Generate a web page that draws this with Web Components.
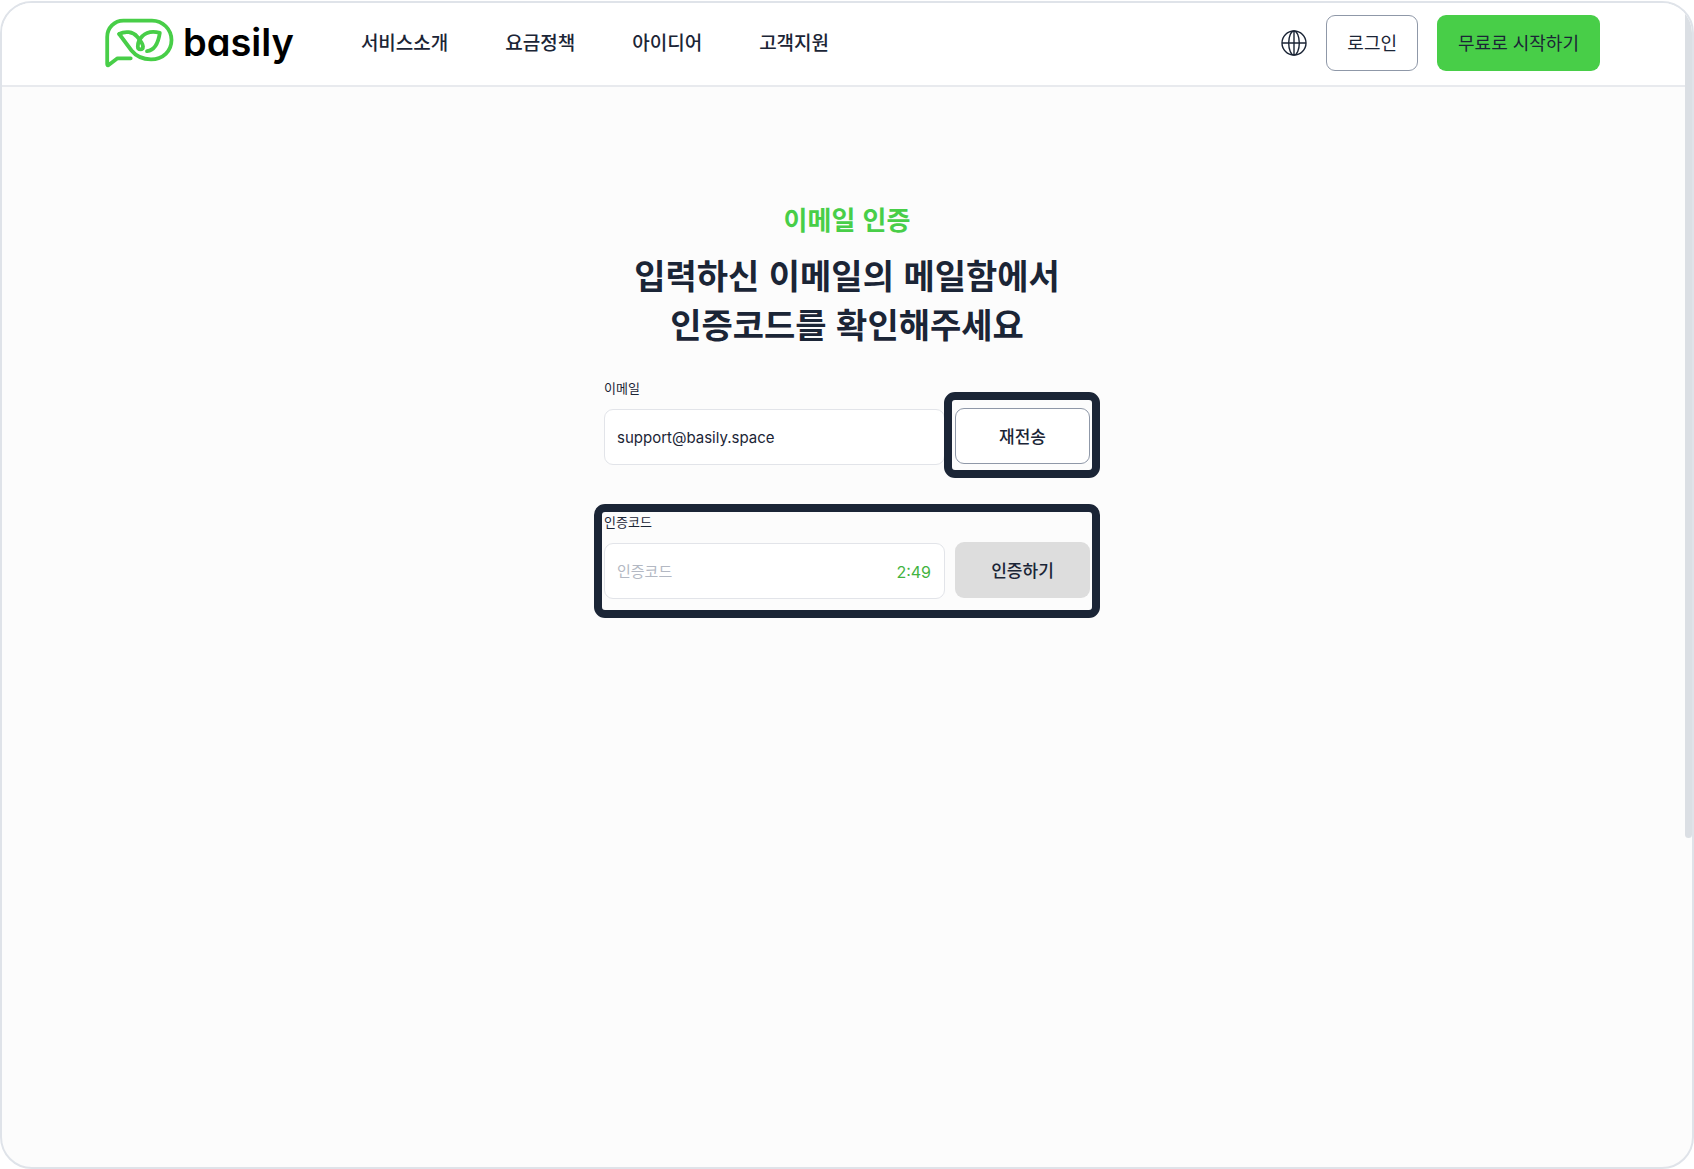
<!DOCTYPE html>
<html lang="ko">
<head>
<meta charset="utf-8">
<meta name="viewport" content="width=device-width, initial-scale=1">
<title>basily – 이메일 인증</title>
<style>
  :root {
    --ink: #1b2536;
    --green: #48ce48;
    --line: #dfe3e9;
    --kr: "Noto Sans CJK KR", "Noto Sans", sans-serif;
    --latin: Inter, "Noto Sans CJK KR", sans-serif;
  }
  body { margin: 0; background: #fff; color: var(--ink); font-family: var(--kr); }
</style>
</head>
<body>
<app-frame>
  <site-header slot="header">
    <nav-link href="#service">서비스소개</nav-link>
    <nav-link href="#pricing">요금정책</nav-link>
    <nav-link href="#ideas">아이디어</nav-link>
    <nav-link href="#support">고객지원</nav-link>
    <ui-button slot="actions" kind="outline">로그인</ui-button>
    <ui-button slot="actions" kind="primary">무료로 시작하기</ui-button>
  </site-header>
  <verify-page></verify-page>
</app-frame>

<script>
const define = (name, html, setup) => {
  const template = document.createElement('template');
  template.innerHTML = html;
  customElements.define(name, class extends HTMLElement {
    constructor() {
      super();
      this.attachShadow({ mode: 'open' }).append(template.content.cloneNode(true));
    }
    connectedCallback() { if (setup) setup(this, this.shadowRoot); }
  });
};

define('app-frame', `
  <style>
    :host { display: block; padding-top: 1px; box-sizing: border-box; min-height: 100vh; }
    .frame {
      position: relative; box-sizing: border-box; min-height: calc(100vh - 1px);
      border: 2px solid var(--line); border-radius: 32px; overflow: hidden; background: #fcfcfc;
    }
    .thumb {
      position: absolute; top: 0; right: 0; width: 7px; height: 835px;
      border-radius: 0 0 4px 4px; background: #dbdfe4;
    }
  </style>
  <div class="frame">
    <slot name="header"></slot>
    <main><slot></slot></main>
    <div class="thumb"></div>
  </div>`);

define('brand-logo', `
  <style>
    :host { display: block; }
    a { display: flex; align-items: center; gap: 8px; color: #000; text-decoration: none; }
    svg { display: block; width: 70px; height: 50px; }
    span { padding-bottom: 2px; font: 600 38px/46px var(--latin); font-feature-settings: "cv11"; }
  </style>
  <a href="#home">
    <svg viewBox="0 0 70 50" fill="none" stroke="#48ce48" stroke-width="3.800" stroke-linecap="round" stroke-linejoin="round" aria-hidden="true">
      <path d="M25.700 40.300H12.500L3.300 47.200Q2.200 47.600 2.200 46V19A16.200 16.200 0 0 1 18.400 2.600H47A19.500 19.500 0 0 1 66.500 22C66.500 33 58 41.300 46 41.300C36 41.300 30.500 37.500 26.500 32.500L14.200 16"/>
      <path d="M14.200 16C20 12.800 28 13.500 32 18.500C34.500 21.500 38 25.500 38 28.500C38 32.300 32.800 32.300 32.800 28.500C32.800 25.500 33.800 21.500 37.500 18C42 13.500 49 13.300 54.800 14.800C53.500 24 50 32.300 42 33.200"/>
    </svg>
    <span>basily</span>
  </a>`);

define('nav-link', `
  <style>
    :host { display: block; }
    a { display: block; padding-bottom: 2px; font-size: 19px; line-height: 28px; font-weight: 500; color: var(--ink); text-decoration: none; white-space: nowrap; }
  </style>
  <a><slot></slot></a>`, (host, root) => root.querySelector('a').setAttribute('href', host.getAttribute('href')));

define('ui-button', `
  <style>
    :host { display: block; }
    button {
      box-sizing: border-box; width: 100%; height: 56px; padding: 0 20px 2px;
      border: 1px solid transparent; border-radius: 9px; cursor: pointer;
      font: 400 18px/26px var(--kr); color: var(--ink); white-space: nowrap;
    }
    :host([kind="outline"]) button { background: #fff; border-color: #8f98a8; }
    :host([kind="primary"]) button { background: var(--green); }
    :host([kind="muted"]) button { background: #ddd; }
    :host([strong]) button { padding-bottom: 0; font-size: 17px; font-weight: 500; }
  </style>
  <button type="button"><slot></slot></button>`);

define('site-header', `
  <style>
    :host { display: block; background: #fff; border-bottom: 2px solid #e8eaee; }
    header { display: flex; align-items: center; padding: 12px 92px 14px 103px; }
    nav { display: flex; gap: 57px; margin-left: 67px; }
    .actions { display: flex; align-items: center; gap: 19px; margin-left: auto; }
    .globe { display: block; padding: 0; border: 0; background: none; color: var(--ink); cursor: pointer; }
    .globe svg { display: block; width: 26px; height: 26px; }
  </style>
  <header>
    <brand-logo></brand-logo>
    <nav aria-label="주요 메뉴"><slot></slot></nav>
    <div class="actions">
      <button class="globe" type="button" aria-label="언어 선택">
        <svg viewBox="0 0 26 26" fill="none" stroke="currentColor" stroke-width="1.400">
          <circle cx="13" cy="13" r="12"/>
          <ellipse cx="13" cy="13" rx="5.300" ry="12"/>
          <path d="M1 13H25M13 1V25"/>
        </svg>
      </button>
      <slot name="actions"></slot>
    </div>
  </header>`);

define('field-row', `
  <style>
    :host { display: grid; grid-template-columns: 1fr 135px; column-gap: 10px; align-items: end; position: relative; }
    label { display: block; margin-bottom: 11px; font-size: 13px; line-height: 20px; }
    .box {
      box-sizing: border-box; display: flex; align-items: center; height: 56px; padding: 2px 13px 0 12px;
      border: 1px solid #e2e4e9; border-radius: 9px; background: #fff;
    }
    input {
      flex: 1; min-width: 0; padding: 0; border: 0; outline: 0; background: none;
      font: 400 15px/24px var(--latin); color: var(--ink);
    }
    input::placeholder { color: #b3b8c3; opacity: 1; }
    time { font: 400 16px/24px var(--latin); color: #43b33f; }
    time:empty { display: none; }
    .action { position: relative; padding-bottom: 1px; }
    :host([mark="action"]) .action::after,
    :host([mark="row"])::after {
      content: ""; position: absolute; inset: -16px -10px -13px -11px;
      border: 8px solid var(--ink); border-radius: 11px; pointer-events: none;
    }
    :host([mark="row"])::after { inset: -8px -10px -19px -10px; }
  </style>
  <div class="field">
    <label for="control"></label>
    <div class="box"><input id="control"><time></time></div>
  </div>
  <div class="action"><slot></slot></div>`, (host, root) => {
  const input = root.querySelector('input');
  root.querySelector('label').textContent = host.getAttribute('label');
  input.type = host.getAttribute('type') || 'text';
  input.value = host.getAttribute('value') || '';
  input.placeholder = host.getAttribute('placeholder') || '';
  root.querySelector('time').textContent = host.getAttribute('timer') || '';
});

define('verify-page', `
  <style>
    :host { display: block; padding: 115px 24px 80px; }
    .eyebrow { margin: 0; font-size: 26px; line-height: 34px; font-weight: 700; color: var(--green); text-align: center; }
    h1 { margin: 14px 0 0; font-size: 34px; line-height: 49px; font-weight: 700; text-align: center; }
    form { display: grid; gap: 47px; width: 100%; max-width: 486px; margin: 30px auto 0; }
  </style>
  <section>
    <p class="eyebrow">이메일 인증</p>
    <h1>입력하신 이메일의 메일함에서<br>인증코드를 확인해주세요</h1>
    <form>
      <field-row label="이메일" type="email" value="support@basily.space" mark="action">
        <ui-button kind="outline" strong>재전송</ui-button>
      </field-row>
      <field-row label="인증코드" placeholder="인증코드" timer="2:49" mark="row">
        <ui-button kind="muted" strong>인증하기</ui-button>
      </field-row>
    </form>
  </section>`);
</script>
</body>
</html>
